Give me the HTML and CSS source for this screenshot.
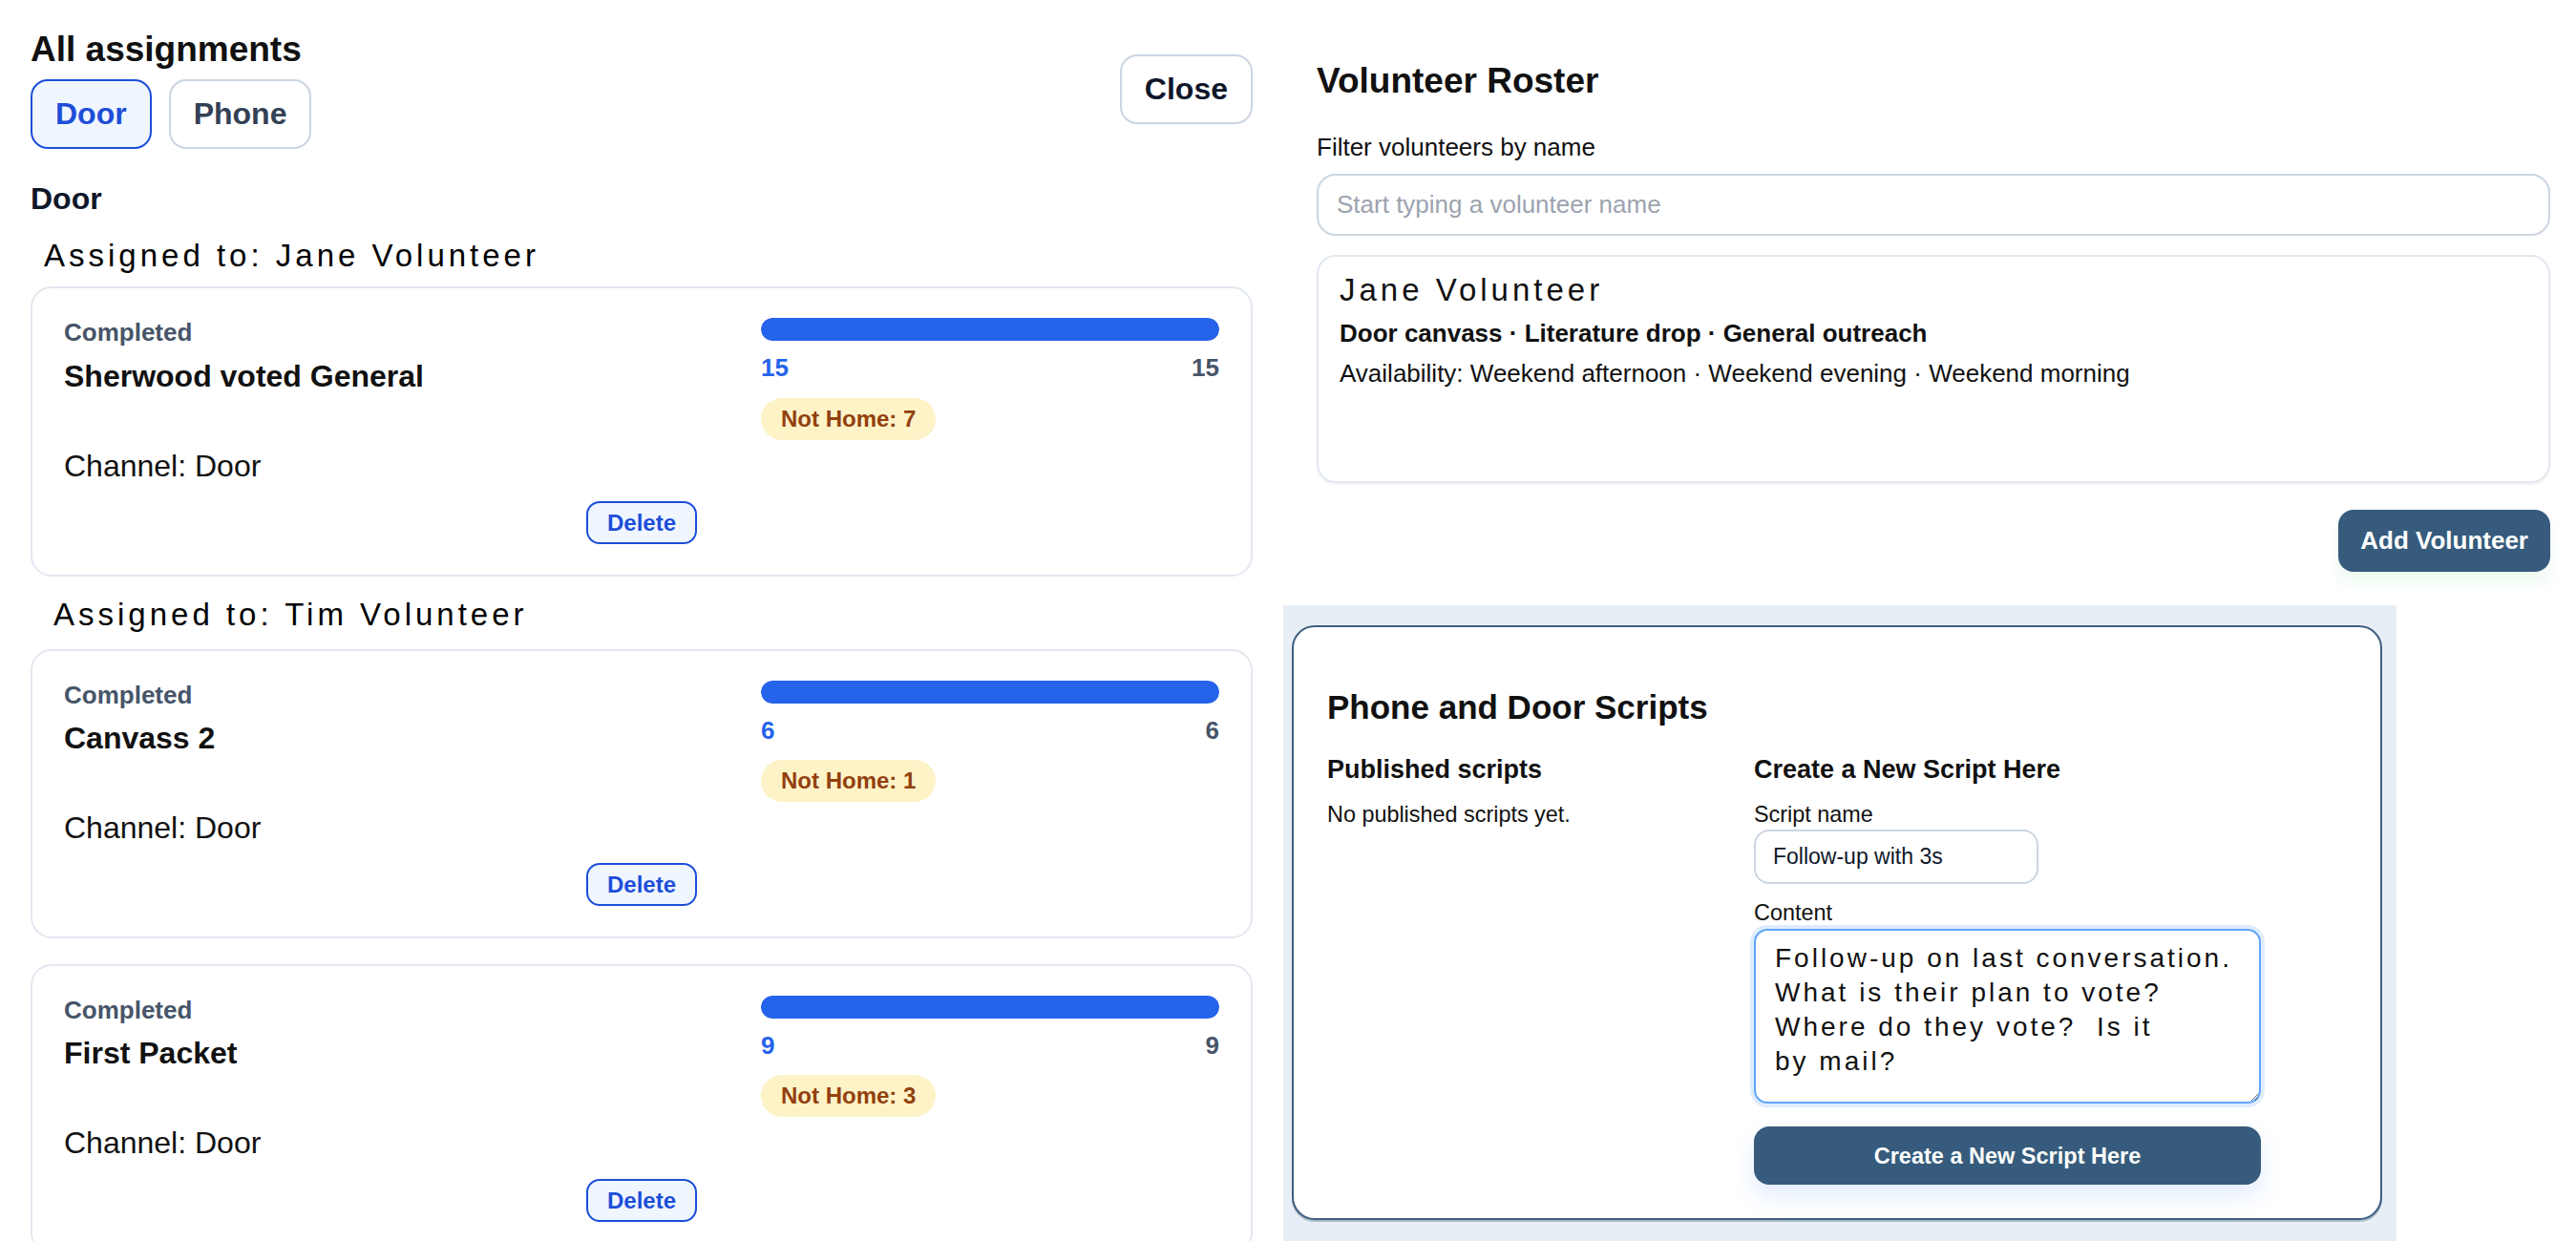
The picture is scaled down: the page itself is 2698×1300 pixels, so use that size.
FILE: index.html
```html
<!DOCTYPE html>
<html>
<head>
    <title>Assignments and Volunteers</title>
    <link rel="stylesheet" href="styles.css">
</head>
<body>
<div class="page">

    <section class="assignments">
        <header class="assign-head">
            <div>
                <h1 class="title">All assignments</h1>
                <div class="tabs">
                    <button class="tab active">Door</button>
                    <button class="tab">Phone</button>
                </div>
            </div>
            <button class="close-btn">Close</button>
        </header>

        <h2 class="channel-title">Door</h2>

        <div class="assignee">Assigned to: Jane Volunteer</div>
        <div class="card">
            <div class="card-top">
                <div class="card-info">
                    <div class="status">Completed</div>
                    <div class="card-name">Sherwood voted General</div>
                </div>
                <div class="progress">
                    <div class="bar"><div class="bar-fill" style="width: 100%"></div></div>
                    <div class="counts"><span class="done">15</span><span class="total">15</span></div>
                    <span class="pill">Not Home: 7</span>
                </div>
            </div>
            <p class="channel">Channel: Door</p>
            <div class="card-actions"><button class="delete-btn">Delete</button></div>
        </div>

        <div class="assignee nested">Assigned to: Tim Volunteer</div>
        <div class="card">
            <div class="card-top">
                <div class="card-info">
                    <div class="status">Completed</div>
                    <div class="card-name">Canvass 2</div>
                </div>
                <div class="progress">
                    <div class="bar"><div class="bar-fill" style="width: 100%"></div></div>
                    <div class="counts"><span class="done">6</span><span class="total">6</span></div>
                    <span class="pill">Not Home: 1</span>
                </div>
            </div>
            <p class="channel">Channel: Door</p>
            <div class="card-actions"><button class="delete-btn">Delete</button></div>
        </div>

        <div class="card">
            <div class="card-top">
                <div class="card-info">
                    <div class="status">Completed</div>
                    <div class="card-name">First Packet</div>
                </div>
                <div class="progress">
                    <div class="bar"><div class="bar-fill" style="width: 100%"></div></div>
                    <div class="counts"><span class="done">9</span><span class="total">9</span></div>
                    <span class="pill">Not Home: 3</span>
                </div>
            </div>
            <p class="channel">Channel: Door</p>
            <div class="card-actions"><button class="delete-btn">Delete</button></div>
        </div>
    </section>

    <aside class="side">
        <section class="roster">
            <h2 class="roster-title">Volunteer Roster</h2>
            <label class="filter-label" for="filter">Filter volunteers by name</label>
            <input class="filter-input" id="filter" type="text" placeholder="Start typing a volunteer name">

            <div class="vol-card">
                <div class="vol-name">Jane Volunteer</div>
                <div class="vol-skills">Door canvass · Literature drop · General outreach</div>
                <div class="vol-avail">Availability: Weekend afternoon · Weekend evening · Weekend morning</div>
            </div>

            <div class="roster-actions">
                <button class="primary-btn add-btn">Add Volunteer</button>
            </div>
        </section>

        <div class="scripts-wrap">
            <section class="scripts-card">
                <h2 class="scripts-title">Phone and Door Scripts</h2>
                <div class="scripts-grid">
                    <div>
                        <h3 class="col-title">Published scripts</h3>
                        <p class="empty">No published scripts yet.</p>
                    </div>
                    <div class="script-form">
                        <h3 class="col-title">Create a New Script Here</h3>
                        <label class="field-label" for="sname">Script name</label>
                        <input class="name-input" id="sname" type="text" value="Follow-up with 3s">
                        <label class="field-label content-label" for="scontent">Content</label>
                        <textarea class="content-input" id="scontent" wrap="off">Follow-up on last conversation.
What is their plan to vote?
Where do they vote?  Is it
by mail?</textarea>
                        <button class="primary-btn create-btn">Create a New Script Here</button>
                    </div>
                </div>
            </section>
        </div>
    </aside>

</div>
</body>
</html>
```

FILE: styles.css
```css
body {
    margin: 0;
    font-family: "Liberation Sans", Arial, sans-serif;
    color: #111;
    background: #fff;
}

button,
input,
textarea {
    font-family: "Liberation Sans", Arial, sans-serif;
}

.page {
    display: grid;
    grid-template-columns: 1280px 1fr;
    column-gap: 32px;
    padding-left: 32px;
    align-items: start;
}

/* left: assignments */
.assignments {
    padding-top: 30px;
}

.assign-head {
    display: flex;
    justify-content: space-between;
    align-items: center;
}

.title {
    margin: 0;
    font-size: 37px;
    line-height: 1.2;
    color: #111;
}

.tabs {
    display: flex;
    gap: 18px;
    margin-top: 9px;
}

.tab {
    font-size: 32px;
    font-weight: bold;
    line-height: 39px;
    padding: 15px 24px;
    border: 2px solid #cbd5e1;
    border-radius: 18px;
    background: #fff;
    color: #334155;
}

.tab.active {
    border-color: #1d4ed8;
    background: #eff6ff;
    color: #1d4ed8;
}

.close-btn {
    font-size: 32px;
    font-weight: bold;
    line-height: 39px;
    padding: 15px 24px;
    border: 2px solid #cbd5e1;
    border-radius: 18px;
    background: #fff;
    color: #0f172a;
}

.channel-title {
    margin: 33px 0 0;
    font-size: 32px;
    line-height: 1.2;
    color: #0f172a;
}

.assignee {
    margin: 20px 0 13px;
    padding-left: 14px;
    font-size: 33px;
    line-height: 1.2;
    letter-spacing: 4px;
    color: #000;
}

.assignee.nested {
    padding-left: 24px;
    margin-bottom: 16px;
}

.card {
    border: 2px solid #e2e8f0;
    border-radius: 22px;
    padding: 31px 33px 32px;
    background: #fff;
}

.card + .card {
    margin-top: 27px;
}

.card-top {
    display: grid;
    grid-template-columns: 1fr 480px;
    column-gap: 24px;
}

.status {
    font-size: 26px;
    font-weight: bold;
    line-height: 1.2;
    color: #475569;
}

.card-name {
    margin-top: 10px;
    font-size: 32px;
    font-weight: bold;
    line-height: 1.2;
    color: #111;
}

.bar {
    height: 24px;
    border-radius: 12px;
    background: #e2e8f0;
    overflow: hidden;
}

.bar-fill {
    height: 100%;
    background: #2563eb;
    border-radius: 12px;
}

.counts {
    display: flex;
    justify-content: space-between;
    margin-top: 13px;
    font-size: 26px;
    font-weight: bold;
    line-height: 1.2;
}

.done {
    color: #2563eb;
}

.total {
    color: #475569;
}

.pill {
    display: inline-block;
    margin-top: 15px;
    padding: 8px 21px;
    border-radius: 22px;
    background: #fef3c7;
    color: #92400e;
    font-size: 24px;
    font-weight: bold;
    line-height: 28px;
}

.channel {
    margin: 8px 0 0;
    font-size: 32px;
    line-height: 1.2;
}

.card-actions {
    display: flex;
    justify-content: center;
    margin-top: 18px;
}

.delete-btn {
    font-size: 24px;
    font-weight: bold;
    line-height: 29px;
    padding: 6px 20px;
    border: 2px solid #1d4ed8;
    border-radius: 14px;
    background: #eff6ff;
    color: #1d4ed8;
}

/* right: roster + scripts */
.side {
    padding-top: 63px;
}

.roster {
    padding: 0 27px 0 35px;
}

.roster-title {
    margin: 0;
    font-size: 37px;
    line-height: 1.2;
    color: #111;
}

.filter-label {
    display: block;
    margin-top: 32px;
    font-size: 26px;
    line-height: 1.2;
}

.filter-input {
    display: block;
    box-sizing: border-box;
    width: 100%;
    height: 65px;
    margin-top: 11px;
    padding: 0 19px;
    border: 2px solid #cbd5e1;
    border-radius: 20px;
    font-size: 26px;
    color: #111;
}

.filter-input::placeholder {
    color: #9ca3af;
}

.vol-card {
    box-sizing: border-box;
    min-height: 239px;
    margin-top: 20px;
    padding: 15px 22px;
    border: 2px solid #e2e8f0;
    border-radius: 20px;
    box-shadow: 0 2px 2px rgba(0, 0, 0, 0.05);
}

.vol-name {
    font-size: 33px;
    line-height: 1.2;
    letter-spacing: 4px;
}

.vol-skills {
    margin-top: 11px;
    font-size: 26px;
    font-weight: bold;
    line-height: 1.2;
}

.vol-avail {
    margin-top: 11px;
    font-size: 26px;
    line-height: 1.2;
}

.roster-actions {
    display: flex;
    justify-content: flex-end;
    margin-top: 28px;
}

.primary-btn {
    border: none;
    border-radius: 16px;
    background: #365b7c;
    color: #fff;
    font-weight: bold;
}

.add-btn {
    font-size: 26px;
    line-height: 1.2;
    padding: 17px 23px;
    box-shadow: 0 12px 16px rgba(34, 197, 94, 0.08);
}

.scripts-wrap {
    width: 1166px;
    box-sizing: border-box;
    margin-top: 35px;
    padding: 21px 15px 40px 9px;
    background: #e8eef5;
}

.scripts-card {
    padding: 35px;
    border: 2px solid #3f5f80;
    border-radius: 24px;
    background: #fff;
    box-shadow: 0 2px 0 rgba(54, 91, 124, 0.35);
}

.scripts-title {
    margin: 28px 0 0;
    font-size: 35px;
    line-height: 1.2;
    color: #111;
}

.scripts-grid {
    display: grid;
    grid-template-columns: 420px 531px;
    column-gap: 27px;
    margin-top: 28px;
}

.col-title {
    margin: 0;
    font-size: 27px;
    line-height: 1.2;
    color: #111;
}

.empty {
    margin: 17px 0 0;
    font-size: 23.4px;
    line-height: 1.2;
}

.field-label {
    display: block;
    margin-top: 17px;
    font-size: 23.4px;
    line-height: 1.2;
}

.content-label {
    margin-top: 16px;
}

.name-input {
    display: block;
    box-sizing: border-box;
    width: 298px;
    height: 57px;
    margin-top: 2px;
    padding: 0 18px;
    border: 2px solid #cbd5e1;
    border-radius: 16px;
    font-size: 23px;
    color: #0f172a;
}

.content-input {
    display: block;
    box-sizing: border-box;
    width: 100%;
    height: 183px;
    margin-top: 3px;
    padding: 11px 20px;
    border: 2px solid #60a5fa;
    border-radius: 14px;
    box-shadow: 0 0 0 4px rgba(147, 197, 253, 0.3);
    font-size: 28px;
    line-height: 36px;
    letter-spacing: 3px;
    color: #111;
    overflow: auto;
    resize: both;
    outline: none;
}

.create-btn {
    display: block;
    width: 100%;
    height: 61px;
    margin-top: 24px;
    font-size: 23.5px;
    line-height: 1.2;
    box-shadow: 0 12px 24px rgba(59, 130, 246, 0.15);
}
```
